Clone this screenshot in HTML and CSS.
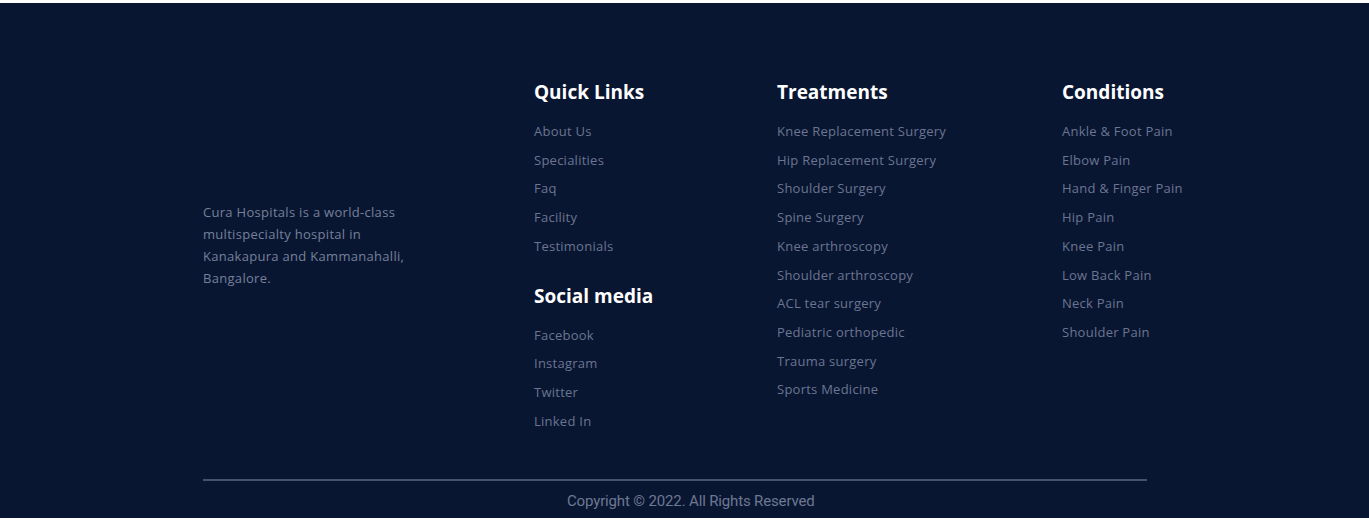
FILE: index.html
```html
<!DOCTYPE html>
<html lang="en">
<head>
<meta charset="utf-8">
<title>Cura Hospitals Footer</title>
<link rel="stylesheet" href="styles.css">
</head>
<body>
<footer class="footer">
  <div class="container">
    <div class="cols">
      <div class="col col-about">
        <p class="about-text">Cura Hospitals is a world-class multispecialty hospital in Kanakapura and Kammanahalli, Bangalore.</p>
      </div>
      <div class="col col-quick">
        <h3 class="col-title">Quick Links</h3>
        <ul class="links">
          <li>About Us</li>
          <li>Specialities</li>
          <li>Faq</li>
          <li>Facility</li>
          <li>Testimonials</li>
        </ul>
        <h3 class="col-title social-title">Social media</h3>
        <ul class="links">
          <li>Facebook</li>
          <li>Instagram</li>
          <li>Twitter</li>
          <li>Linked In</li>
        </ul>
      </div>
      <div class="col col-treat">
        <h3 class="col-title">Treatments</h3>
        <ul class="links">
          <li>Knee Replacement Surgery</li>
          <li>Hip Replacement Surgery</li>
          <li>Shoulder Surgery</li>
          <li>Spine Surgery</li>
          <li>Knee arthroscopy</li>
          <li>Shoulder arthroscopy</li>
          <li>ACL tear surgery</li>
          <li>Pediatric orthopedic</li>
          <li>Trauma surgery</li>
          <li>Sports Medicine</li>
        </ul>
      </div>
      <div class="col col-cond">
        <h3 class="col-title">Conditions</h3>
        <ul class="links">
          <li>Ankle &amp; Foot Pain</li>
          <li>Elbow Pain</li>
          <li>Hand &amp; Finger Pain</li>
          <li>Hip Pain</li>
          <li>Knee Pain</li>
          <li>Low Back Pain</li>
          <li>Neck Pain</li>
          <li>Shoulder Pain</li>
        </ul>
      </div>
    </div>
    <div class="divider"></div>
    <p class="copyright">Copyright © 2022. All Rights Reserved</p>
  </div>
</footer>
</body>
</html>
```
FILE: styles.css
```css
html, body {
  margin: 0;
  padding: 0;
  background: #ffffff;
}
body {
  padding-top: 3px;
  font-family: "Open Sans", "Noto Sans", sans-serif;
}
.footer {
  background: #091631;
  height: 515px;
  box-sizing: border-box;
  padding-top: 75px;
}
.container {
  width: 944px;
  margin-left: 203px;
}
.cols {
  display: flex;
}
.col {
  flex-shrink: 0;
}
.col-about { width: 331px; }
.col-quick { width: 243px; }
.col-treat { width: 285px; }
.col-cond { flex: 1 0 0; min-width: 0; white-space: nowrap; }

.about-text {
  margin: 123px 0 0;
  width: 215px;
  font-size: 13px;
  line-height: 22px;
  letter-spacing: 0.3px;
  color: #76809b;
}
.col-title {
  margin: 0 0 11px;
  font-size: 19px;
  line-height: 28px;
  font-weight: 700;
  color: #ffffff;
  letter-spacing: 0;
  white-space: nowrap;
}
.social-title {
  margin-top: 21px;
}
.links {
  list-style: none;
  margin: 0;
  padding: 0;
}
.links li {
  font-size: 13px;
  line-height: 28.7px;
  letter-spacing: 0.25px;
  color: #6b7592;
  white-space: nowrap;
}
.divider {
  margin-top: 44px;
  height: 2px;
  background: #46526e;
}
.copyright {
  margin: 10px 0 0;
  padding-left: 364px;
  font-family: "Roboto", sans-serif;
  font-size: 15px;
  line-height: 20px;
  letter-spacing: -0.15px;
  color: #6e7893;
}
```
